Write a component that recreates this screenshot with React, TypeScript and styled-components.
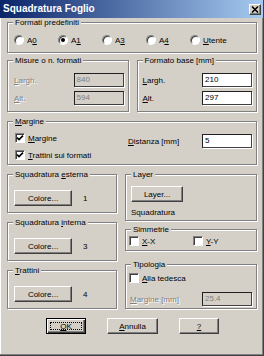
import React from 'react';
import styled, { createGlobalStyle } from 'styled-components';

const Global = createGlobalStyle`
  html, body { margin: 0; padding: 0; background: #d4d0c8; }
  body { font-family: "Liberation Sans", Arial, sans-serif; font-size: 8px; color: #000; }
  * { box-sizing: border-box; }
`;

const Window = styled.div`
  width: 264px;
  height: 356px;
  background: #d4d0c8;
  border-right: 1px solid #404040;
  border-bottom: 1px solid #404040;
  box-shadow: inset -1px -1px 0 #808080, inset 1px 1px 0 #fff;
  display: flex;
  flex-direction: column;
  overflow: hidden;
`;

const TitleBar = styled.div`
  height: 18px;
  flex: none;
  background: linear-gradient(to right, #0a246a, #a6caf0);
  display: flex;
  align-items: center;
  justify-content: space-between;
  padding: 0 2px 0 3px;
`;

const Title = styled.span`
  color: #fff;
  font-weight: bold;
  font-size: 10px;
  line-height: 12px;
  white-space: nowrap;
`;

const CloseButton = styled.div`
  width: 12px;
  height: 11px;
  background: #d4d0c8;
  border: 1px solid;
  border-color: #fff #404040 #404040 #fff;
  box-shadow: inset -1px -1px 0 #808080;
  display: flex;
  align-items: center;
  justify-content: center;
`;

const Body = styled.div`
  flex: 1;
  display: flex;
  flex-direction: column;
  padding: 0 6px 0 7px;
`;

const Group = styled.div<{ $h: number; $mt?: number; $pad?: string }>`
  position: relative;
  flex: none;
  height: ${p => p.$h}px;
  margin-top: ${p => p.$mt ?? 0}px;
  padding: ${p => p.$pad ?? '0'};
  border: 1px solid #808080;
  box-shadow: inset 1px 1px 0 #fff, 1px 1px 0 #fff;
`;

const Legend = styled.span`
  position: absolute;
  top: -5px;
  left: 5px;
  padding: 0 2px;
  background: #d4d0c8;
  line-height: 9px;
  white-space: nowrap;
`;

const Pair = styled.div<{ $mt: number }>`
  display: flex;
  gap: 8px;
  margin-top: ${p => p.$mt}px;
  & > * { flex: 1; }
`;

const Split = styled.div<{ $mt: number }>`
  display: flex;
  gap: 8px;
  margin-top: ${p => p.$mt}px;
`;

const Column = styled.div<{ $w?: number }>`
  display: flex;
  flex-direction: column;
  width: ${p => (p.$w ? `${p.$w}px` : 'auto')};
  flex: ${p => (p.$w ? 'none' : '1')};
`;

const RadioRow = styled.div`
  display: grid;
  grid-template-columns: repeat(5, 44px);
`;

const Choice = styled.div<{ $w?: number }>`
  display: flex;
  align-items: center;
  gap: 3px;
  height: 10px;
  line-height: 9px;
  white-space: nowrap;
  width: ${p => (p.$w ? `${p.$w}px` : 'auto')};
`;

const RadioCircle = styled.span<{ $on?: boolean }>`
  width: 10px;
  height: 10px;
  flex: none;
  border-radius: 50%;
  background: #fff;
  border: 1px solid;
  border-color: #808080 #fff #fff #808080;
  box-shadow: inset 1px 1px 0 #404040;
  display: flex;
  align-items: center;
  justify-content: center;
  &::after {
    content: '';
    width: 4px;
    height: 4px;
    border-radius: 50%;
    background: ${p => (p.$on ? '#000' : 'transparent')};
  }
`;

const CheckBox = styled.span`
  width: 10px;
  height: 10px;
  flex: none;
  background: #fff;
  border: 1px solid;
  border-color: #808080 #fff #fff #808080;
  box-shadow: inset 1px 1px 0 #404040;
  display: flex;
  align-items: center;
  justify-content: center;
`;

const Stack = styled.div<{ $gap: number }>`
  display: flex;
  flex-direction: column;
  gap: ${p => p.$gap}px;
`;

const FieldRow = styled.div<{ $mt?: number; $pl?: number }>`
  display: flex;
  align-items: center;
  justify-content: space-between;
  height: 14px;
  margin-top: ${p => p.$mt ?? 0}px;
  padding-left: ${p => p.$pl ?? 0}px;
`;

const Label = styled.span<{ $off?: boolean }>`
  white-space: nowrap;
  line-height: 9px;
  color: ${p => (p.$off ? '#808080' : '#000')};
  text-shadow: ${p => (p.$off ? '1px 1px 0 #fff' : 'none')};
`;

const TextBox = styled.div<{ $off?: boolean; $w: number }>`
  width: ${p => p.$w}px;
  height: 14px;
  flex: none;
  padding: 0 2px;
  line-height: 12px;
  background: ${p => (p.$off ? '#d4d0c8' : '#fff')};
  color: ${p => (p.$off ? '#808080' : '#000')};
  border: 1px solid;
  border-color: #202020 #404040 #404040 #202020;
  box-shadow: 1px 1px 0 #fff;
`;

const MarginLayout = styled.div`
  display: flex;
`;

const MarginRight = styled.div`
  flex: 1;
  display: flex;
  align-items: center;
  justify-content: space-between;
  height: 14px;
  margin-top: 1px;
`;

const ButtonRow = styled.div<{ $gap: number }>`
  display: flex;
  align-items: center;
  gap: ${p => p.$gap}px;
`;

const Button = styled.div<{ $w: number; $default?: boolean }>`
  width: ${p => p.$w}px;
  height: 16px;
  flex: none;
  background: #d4d0c8;
  display: flex;
  align-items: center;
  justify-content: center;
  line-height: 9px;
  border: 1px solid;
  border-color: ${p => (p.$default ? '#000' : '#fff #404040 #404040 #fff')};
  box-shadow: ${p =>
    p.$default
      ? 'inset 1px 1px 0 #fff, inset -1px -1px 0 #404040, inset -2px -2px 0 #808080'
      : 'inset -1px -1px 0 #808080'};
  position: relative;
`;

const FocusRing = styled.span`
  position: absolute;
  inset: 3px;
  border: 1px dotted #000;
`;

const Note = styled.span<{ $mt?: number }>`
  display: block;
  line-height: 9px;
  margin-top: ${p => p.$mt ?? 0}px;
  white-space: nowrap;
`;

const Footer = styled.div`
  display: flex;
  gap: 21px;
  margin-top: 9px;
  padding-left: 39px;
`;

const Check = () => (
  <svg width="8" height="8" viewBox="0 0 8 8">
    <path d="M1 3.6 L3 5.6 L7 1.6" stroke="#000" strokeWidth="1.6" fill="none" />
  </svg>
);

const radios = [
  { pre: 'A', u: '0', post: '', on: false },
  { pre: 'A', u: '1', post: '', on: true },
  { pre: 'A', u: '3', post: '', on: false },
  { pre: 'A', u: '4', post: '', on: false },
  { pre: '', u: 'U', post: 'tente', on: false },
];

export default function App() {
  return (
    <>
      <Global />
      <Window>
        <TitleBar>
          <Title>Squadratura Foglio</Title>
          <CloseButton>
            <svg width="8" height="7" viewBox="0 0 8 7">
              <path d="M1 0.5 L7 6.5 M7 0.5 L1 6.5" stroke="#000" strokeWidth="1.5" />
            </svg>
          </CloseButton>
        </TitleBar>
        <Body>
          <Group $h={31} $mt={4} $pad="12px 0 0 6px">
            <Legend>Formati predefiniti</Legend>
            <RadioRow>
              {radios.map((r, i) => (
                <Choice key={i}>
                  <RadioCircle $on={r.on} />
                  <span>
                    {r.pre}
                    <u>{r.u}</u>
                    {r.post}
                  </span>
                </Choice>
              ))}
            </RadioRow>
          </Group>

          <Pair $mt={7}>
            <Group $h={52} $pad="12px 4px 0 6px">
              <Legend>Misure o n. formati</Legend>
              <Stack $gap={4}>
                <FieldRow>
                  <Label $off><u>L</u>argh.</Label>
                  <TextBox $off $w={50}>840</TextBox>
                </FieldRow>
                <FieldRow>
                  <Label $off><u>A</u>lt.</Label>
                  <TextBox $off $w={50}>594</TextBox>
                </FieldRow>
              </Stack>
            </Group>
            <Group $h={52} $pad="12px 4px 0 5px">
              <Legend>Formato base [mm]</Legend>
              <Stack $gap={4}>
                <FieldRow>
                  <Label><u>L</u>argh.</Label>
                  <TextBox $w={50}>210</TextBox>
                </FieldRow>
                <FieldRow>
                  <Label><u>A</u>lt.</Label>
                  <TextBox $w={50}>297</TextBox>
                </FieldRow>
              </Stack>
            </Group>
          </Pair>

          <Group $h={44} $mt={9} $pad="11px 4px 0 7px">
            <Legend><u>M</u>argine</Legend>
            <MarginLayout>
              <Column $w={113}>
                <Stack $gap={7}>
                  <Choice>
                    <CheckBox><Check /></CheckBox>
                    <span><u>M</u>argine</span>
                  </Choice>
                  <Choice>
                    <CheckBox><Check /></CheckBox>
                    <span><u>T</u>rattini sui formati</span>
                  </Choice>
                </Stack>
              </Column>
              <MarginRight>
                <Label><u>D</u>istanza [mm]</Label>
                <TextBox $w={50}>5</TextBox>
              </MarginRight>
            </MarginLayout>
          </Group>

          <Split $mt={9}>
            <Column $w={110}>
              <Group $h={39} $pad="15px 0 0 6px">
                <Legend>Squadratura <u>e</u>sterna</Legend>
                <ButtonRow $gap={11}>
                  <Button $w={58}>Colore...</Button>
                  <span>1</span>
                </ButtonRow>
              </Group>
              <Group $h={39} $mt={9} $pad="15px 0 0 6px">
                <Legend>Squadratura <u>i</u>nterna</Legend>
                <ButtonRow $gap={11}>
                  <Button $w={58}>Colore...</Button>
                  <span>3</span>
                </ButtonRow>
              </Group>
              <Group $h={39} $mt={9} $pad="15px 0 0 6px">
                <Legend><u>T</u>rattini</Legend>
                <ButtonRow $gap={11}>
                  <Button $w={58}>Colore...</Button>
                  <span>4</span>
                </ButtonRow>
              </Group>
            </Column>
            <Column>
              <Group $h={47} $pad="11px 0 0 5px">
                <Legend>Layer</Legend>
                <Button $w={52}>Layer...</Button>
                <Note $mt={6}>Squadratura</Note>
              </Group>
              <Group $h={22} $mt={8} $pad="6px 0 0 3px">
                <Legend>Simmetrie</Legend>
                <ButtonRow $gap={0}>
                  <Choice $w={64}>
                    <CheckBox />
                    <span><u>X</u>-X</span>
                  </Choice>
                  <Choice>
                    <CheckBox />
                    <span><u>Y</u>-Y</span>
                  </Choice>
                </ButtonRow>
              </Group>
              <Group $h={45} $mt={13} $pad="8px 4px 0 3px">
                <Legend>Tipologia</Legend>
                <Choice>
                  <CheckBox />
                  <span><u>A</u>lla tedesca</span>
                </Choice>
                <FieldRow $mt={9} $pl={1}>
                  <Label $off><u>M</u>argine [mm]</Label>
                  <TextBox $off $w={50}>25.4</TextBox>
                </FieldRow>
              </Group>
            </Column>
          </Split>

          <Footer>
            <Button $w={40} $default>
              <FocusRing />
              <span><u>O</u>K</span>
            </Button>
            <Button $w={51}><span><u>A</u>nnulla</span></Button>
            <Button $w={40}><span><u>?</u></span></Button>
          </Footer>
        </Body>
      </Window>
    </>
  );
}
